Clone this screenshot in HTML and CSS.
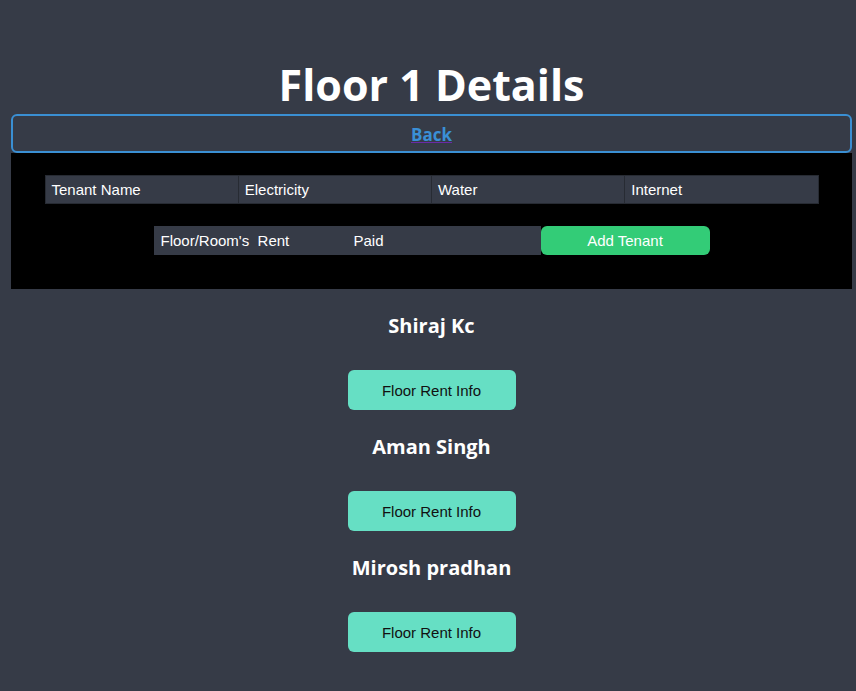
FILE: index.html
```html
<!DOCTYPE html>
<html>
<head>
<meta charset="utf-8">
<link rel="stylesheet" href="styles.css">
</head>
<body>
<div class="page">
  <h1 class="title">Floor 1 Details</h1>
  <button class="back"><a class="back-link" href="#">Back</a></button>
  <div class="panel">
    <table class="grid grid1">
      <tr><td>Tenant Name</td><td>Electricity</td><td>Water</td><td>Internet</td></tr>
    </table>
    <div class="row2">
      <table class="grid grid2">
        <tr><td>Floor/Room's&nbsp; Rent</td><td>Paid</td></tr>
      </table>
      <button class="add">Add Tenant</button>
    </div>
  </div>
  <div class="tenants">
    <div class="tenant">
      <h2 class="name">Shiraj Kc</h2>
      <button class="info">Floor Rent Info</button>
    </div>
    <div class="tenant">
      <h2 class="name">Aman Singh</h2>
      <button class="info">Floor Rent Info</button>
    </div>
    <div class="tenant">
      <h2 class="name">Mirosh pradhan</h2>
      <button class="info">Floor Rent Info</button>
    </div>
  </div>
</div>
</body>
</html>
```
FILE: styles.css
```css
html, body {
  margin: 0;
  padding: 0;
  background: #363b47;
}
.page {
  padding: 58px 4px 0 11px;
  font-family: "Liberation Sans", Arial, sans-serif;
}
.title {
  margin: 0;
  height: 56px;
  text-align: center;
  font-family: "Open Sans", "Noto Sans", sans-serif;
  font-weight: 700;
  font-size: 43px;
  line-height: 54px;
  color: #fff;
}
.back {
  display: block;
  width: 100%;
  height: 39px;
  box-sizing: border-box;
  background: #363b47;
  border: 2px solid #3a8fd3;
  border-radius: 6px;
  padding: 2px 0 0;
  cursor: pointer;
}
.back-link {
  font-family: "Open Sans", "Noto Sans", sans-serif;
  font-weight: 700;
  font-size: 17px;
  color: #3a8fd6;
  text-decoration: underline;
  text-decoration-color: #6a2aa8;
}
.panel {
  background: #000;
  height: 136px;
  padding-top: 22px;
  box-sizing: border-box;
}
.grid {
  border-collapse: collapse;
  margin: 0 auto;
  table-layout: fixed;
}
.grid1 {
  width: 774px;
}
.grid2 {
  width: 387px;
  margin: 0;
}
.grid td {
  height: 28px;
  box-sizing: border-box;
  padding: 0 6px;
  background: #363b47;
  color: #fff;
  font-size: 15px;
  border: 1px solid #272b33;
  white-space: nowrap;
}
.grid2 td {
  border-color: #363b47;
}
.row2 {
  margin-top: 22px;
  display: flex;
  justify-content: center;
}
.add {
  width: 169px;
  height: 29px;
  background: #33cc77;
  color: #fff;
  border: none;
  border-radius: 6px;
  font-family: "Liberation Sans", Arial, sans-serif;
  font-size: 15px;
  padding: 0;
}
.tenants {
  display: flex;
  flex-direction: column;
  align-items: center;
  padding-top: 20px;
}
.tenant {
  display: flex;
  flex-direction: column;
  align-items: center;
  height: 121px;
}
.name {
  margin: 0;
  height: 40px;
  line-height: 34px;
  font-family: "Open Sans", "Noto Sans", sans-serif;
  font-weight: 700;
  font-size: 20px;
  color: #fff;
}
.info {
  margin-top: 21px;
  width: 168px;
  height: 40px;
  background: #66dfc4;
  color: #111;
  border: none;
  border-radius: 6px;
  font-family: "Liberation Sans", Arial, sans-serif;
  font-size: 15px;
  padding: 0;
}
```
